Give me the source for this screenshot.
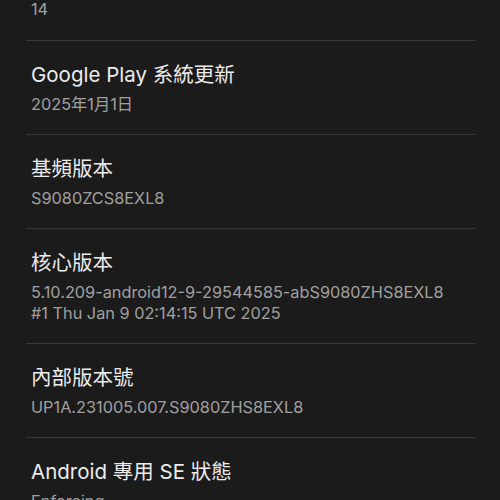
import React from "react";

type Item = { title?: string; lines: string[] };

const items: Item[] = [
  { title: "Google Play 系統更新", lines: ["2025年1月1日"] },
  { title: "基頻版本", lines: ["S9080ZCS8EXL8"] },
  {
    title: "核心版本",
    lines: ["5.10.209-android12-9-29544585-abS9080ZHS8EXL8", "#1 Thu Jan 9 02:14:15 UTC 2025"],
  },
  { title: "內部版本號", lines: ["UP1A.231005.007.S9080ZHS8EXL8"] },
  { title: "Android 專用 SE 狀態", lines: ["Enforcing"] },
];

const font = { fontFamily: 'Inter, "Noto Sans CJK TC", sans-serif' };

function Divider() {
  return <div className="ml-[26px] mr-[25px] h-[1px] bg-[#383838]" />;
}

export default function App() {
  return (
    <div className="w-[500px] h-[500px] overflow-hidden bg-[#1b1b1b]" style={font}>
      <div className="mt-[-1px] pb-[20px] pl-[31px]">
        <div className="text-[16.3px] leading-[21px] text-[#a0a0a0]">14</div>
      </div>
      <Divider />
      {items.map((it, i) => (
        <React.Fragment key={i}>
          <div className="pt-[20px] pb-[19px] pl-[31px]">
            <div className="text-[20.5px] leading-[28px] text-[#ececec]">{it.title}</div>
            <div className="mt-[5px]">
              {it.lines.map((l, j) => (
                <div key={j} className="text-[16.3px] leading-[21px] text-[#a0a0a0]">
                  {l}
                </div>
              ))}
            </div>
          </div>
          {i < items.length - 1 && <Divider />}
        </React.Fragment>
      ))}
    </div>
  );
}
